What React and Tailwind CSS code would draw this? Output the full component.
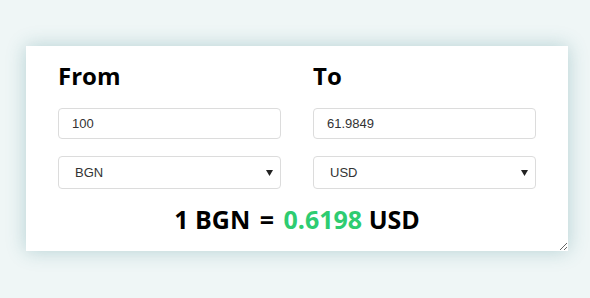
import { useState } from 'react';

const rates = { BGN: 1, USD: 0.619849, EUR: 0.511292 };

const Field = ({ label, amount, setAmount, currency, setCurrency }) => (
    <div className="flex flex-col">
        <h2 className="text-[24px] leading-8 font-bold text-black font-['Open_Sans',sans-serif] mb-[16px]">{label}</h2>
        <input
            type="text"
            value={amount}
            onChange={e => setAmount(e.target.value)}
            className="h-[31px] w-full px-[13px] border border-[#dcdcdc] rounded-[4px] text-[13px] text-[#333] font-['Liberation_Sans',Arial,sans-serif] outline-none"
        />
        <div className="relative mt-[17px]">
            <select
                value={currency}
                onChange={e => setCurrency(e.target.value)}
                className="appearance-none h-[33px] w-full pl-[16px] border border-[#dcdcdc] rounded-[4px] text-[13px] text-[#333] bg-white font-['Liberation_Sans',Arial,sans-serif] outline-none"
            >
                {Object.keys(rates).map(c => <option key={c} value={c}>{c}</option>)}
            </select>
            <svg className="absolute right-[8px] top-[14px] pointer-events-none" width="7" height="6" viewBox="0 0 7 6">
                <path d="M0 0h7L3.5 6z" fill="#222" />
            </svg>
        </div>
    </div>
);

export default function App() {
    const [from, setFrom] = useState('BGN');
    const [to, setTo] = useState('USD');
    const [amount, setAmount] = useState('100');
    const rate = rates[to] / rates[from];
    const converted = (Number(amount) * rate).toFixed(4);

    return (
        <div className="min-h-[298px] bg-[#eff6f6] pt-[46px]">
            <div className="ml-[26px] w-[542px] h-[205px] bg-white resize overflow-auto shadow-[0_0_18px_rgba(60,130,140,0.32)] px-8 pt-[14px]">
                <div className="grid grid-cols-2 gap-8">
                    <Field label="From" amount={amount} setAmount={setAmount} currency={from} setCurrency={setFrom} />
                    <Field label="To" amount={converted} setAmount={() => {}} currency={to} setCurrency={setTo} />
                </div>
                <p className="mt-[14px] text-center text-[25px] leading-8 font-bold text-black font-['Open_Sans',sans-serif]">
                    1 {from} <span className="mx-[3px]">=</span> <span className="text-[#2ecc71]">{rate.toFixed(4)}</span> {to}
                </p>
            </div>
        </div>
    );
}
